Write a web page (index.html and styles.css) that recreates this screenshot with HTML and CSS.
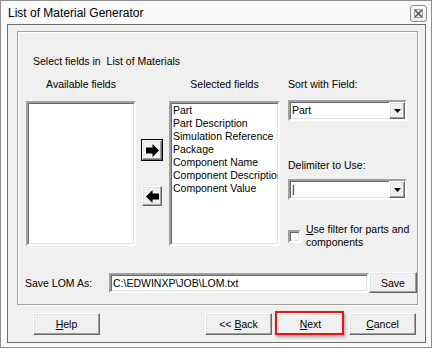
FILE: index.html
```html
<!DOCTYPE html>
<html lang="en">
<head>
  <meta charset="UTF-8">
  <title>List of Material Generator</title>
  <link rel="stylesheet" href="styles.css">
</head>
<body>
  <div class="window">
    <div class="titlebar">
      <span class="title">List of Material Generator</span>
      <span class="close">
        <svg width="9" height="9" viewBox="0 0 9 9">
          <path d="M1 1 L8 8 M8 1 L1 8" stroke="#555" stroke-width="1.6" fill="none"/>
          <rect x="0.5" y="0.5" width="8" height="8" fill="none" stroke="#999" stroke-width="1"/>
        </svg>
      </span>
    </div>

    <div class="client">
      <div class="group">
        <div class="lead">Select fields in&nbsp; List of Materials</div>

        <div class="fields">
          <div class="col col-avail">
            <div class="col-label">Available fields</div>
            <div class="listbox sunken"></div>
          </div>

          <div class="movers">
            <button class="btn mover mover-default">
              <svg width="13" height="13" viewBox="0 0 13 13"><polygon points="0,3.5 6.5,3.5 6.5,0 13,6.5 6.5,13 6.5,9.5 0,9.5" fill="#000"/></svg>
            </button>
            <button class="btn mover">
              <svg width="13" height="13" viewBox="0 0 13 13"><polygon points="13,3.5 6.5,3.5 6.5,0 0,6.5 6.5,13 6.5,9.5 13,9.5" fill="#000"/></svg>
            </button>
          </div>

          <div class="col col-selected">
            <div class="col-label">Selected fields</div>
            <ul class="listbox sunken items">
              <li>Part</li>
              <li>Part Description</li>
              <li>Simulation Reference</li>
              <li>Package</li>
              <li>Component Name</li>
              <li>Component Description</li>
              <li>Component Value</li>
            </ul>
          </div>

          <div class="options">
            <div class="opt-label">Sort with Field:</div>
            <div class="combo sunken">
              <span class="combo-text">Part</span>
              <span class="drop btn"><svg width="7" height="4" viewBox="0 0 7 4"><polygon points="0,0 7,0 3.5,4" fill="#000"/></svg></span>
            </div>
            <div class="opt-label delim-label">Delimiter to Use:</div>
            <div class="combo sunken combo-delim">
              <span class="combo-text">|</span>
              <span class="drop btn"><svg width="7" height="4" viewBox="0 0 7 4"><polygon points="0,0 7,0 3.5,4" fill="#000"/></svg></span>
            </div>
            <label class="check">
              <span class="box sunken"></span>
              <span class="check-text"><u>U</u>se filter for parts and<br>components</span>
            </label>
          </div>
        </div>

        <div class="save-row">
          <span class="save-label">Save LOM As:</span>
          <div class="path-field sunken">C:\EDWINXP\JOB\LOM.txt</div>
          <button class="btn save-btn"><span>Save</span></button>
        </div>
      </div>

      <div class="actions">
        <button class="btn action"><span><u>H</u>elp</span></button>
        <div class="nav">
          <button class="btn action"><span>&lt;&lt; <u>B</u>ack</span></button>
          <button class="btn action next"><span><u>N</u>ext</span><span class="highlight"></span></button>
          <button class="btn action"><span><u>C</u>ancel</span></button>
        </div>
      </div>
    </div>
  </div>
</body>
</html>
```

FILE: styles.css
```css
* { box-sizing: border-box; }
body {
  margin: 0;
  background: #fff;
  font-family: "Liberation Sans", Arial, sans-serif;
  font-size: 10.5px;
  color: #000;
}
.window {
  width: 432px;
  height: 348px;
  border: 1px solid #8e8e8e;
  background: #f9f9f9;
  display: flex;
  flex-direction: column;
}
.titlebar {
  height: 23px;
  display: flex;
  align-items: flex-start;
  padding: 0 4px 0 7px;
}
.title { font-size: 12px; line-height: 13px; margin-top: 6px; }
.close {
  margin-left: auto;
  margin-top: 4px;
  width: 17px;
  height: 17px;
  border: 1px solid #8a8a8a;
  border-radius: 3px;
  background: linear-gradient(#fff, #ececec);
  display: flex;
  align-items: center;
  justify-content: center;
}
.client {
  flex: 1;
  margin: 0 5px 4px 6px;
  border: 1px solid #6f6f6f;
  background: #f0f0f0;
  display: flex;
  flex-direction: column;
}

/* shared 3d borders */
.sunken {
  background: #fff;
  border: 2px solid;
  border-color: #a0a0a0 #fff #fff #a0a0a0;
  box-shadow: inset 1px 1px #696969, inset -1px -1px #e3e3e3;
}
.btn {
  font: inherit;
  color: #000;
  padding: 0;
  background: #f0f0f0;
  border: 1px solid;
  border-color: #fff #696969 #696969 #fff;
  box-shadow: inset -1px -1px #a0a0a0, inset 1px 1px #e3e3e3;
  display: flex;
  align-items: center;
  justify-content: center;
}

.group {
  margin: 6px 7px 0 9px;
  height: 274px;
  border: 1px solid #a0a0a0;
  box-shadow: inset 1px 1px #fff, 1px 1px #fff;
}
.lead { margin: 23px 0 0 15px; line-height: 13px; }
.fields { display: flex; height: 168px; margin: 10px 0 0 8px; }
.col { display: flex; flex-direction: column; }
.col-label { line-height: 13px; text-align: center; margin-bottom: 10px; }
.col-avail { width: 110px; }
.col-selected { width: 111px; margin-left: 7px; }
.listbox { height: 145px; margin: 0; overflow: hidden; }
.items { list-style: none; padding: 1px 0 0 2px; }
.items li { line-height: 13px; white-space: nowrap; }

.movers {
  width: 20px;
  margin-left: 6px;
  padding-top: 62px;
  display: flex;
  flex-direction: column;
  gap: 26px;
}
.mover { width: 20px; height: 20px; }
.mover-default { outline: 1px solid #000; outline-offset: 0; }

.options { width: 119px; margin-left: 8px; display: flex; flex-direction: column; }
.opt-label { line-height: 13px; }
.combo {
  margin-top: 9px;
  height: 21px;
  display: flex;
  align-items: center;
  padding: 0 0 0 2px;
}
.combo-text { flex: 1; line-height: 13px; }
.drop { width: 16px; height: 17px; }
.delim-label { margin-top: 38px; }
.combo-delim { margin-top: 7px; }
.check { display: flex; gap: 5px; margin-top: 23px; }
.box { width: 13px; height: 13px; margin-top: 7px; flex: none; }
.check-text { line-height: 13px; white-space: nowrap; }

.save-row { display: flex; align-items: center; margin-top: 26px; padding-left: 7px; }
.save-label { width: 84px; }
.path-field { width: 260px; height: 20px; padding-left: 2px; line-height: 16px; }
.save-btn { width: 48px; height: 21px; margin-right: -1px; }

.actions { display: flex; margin-top: 8px; padding: 0 9px 0 25px; }
.action { width: 67px; height: 22px; }
.nav { display: flex; gap: 5px; margin-left: auto; }
.next { position: relative; }
.highlight {
  position: absolute;
  left: -3px;
  top: -3px;
  right: -1px;
  bottom: -1px;
  border: 2px solid #e3141b;
  box-shadow: 1px 2px 3px rgba(0, 0, 0, 0.35);
}
```
